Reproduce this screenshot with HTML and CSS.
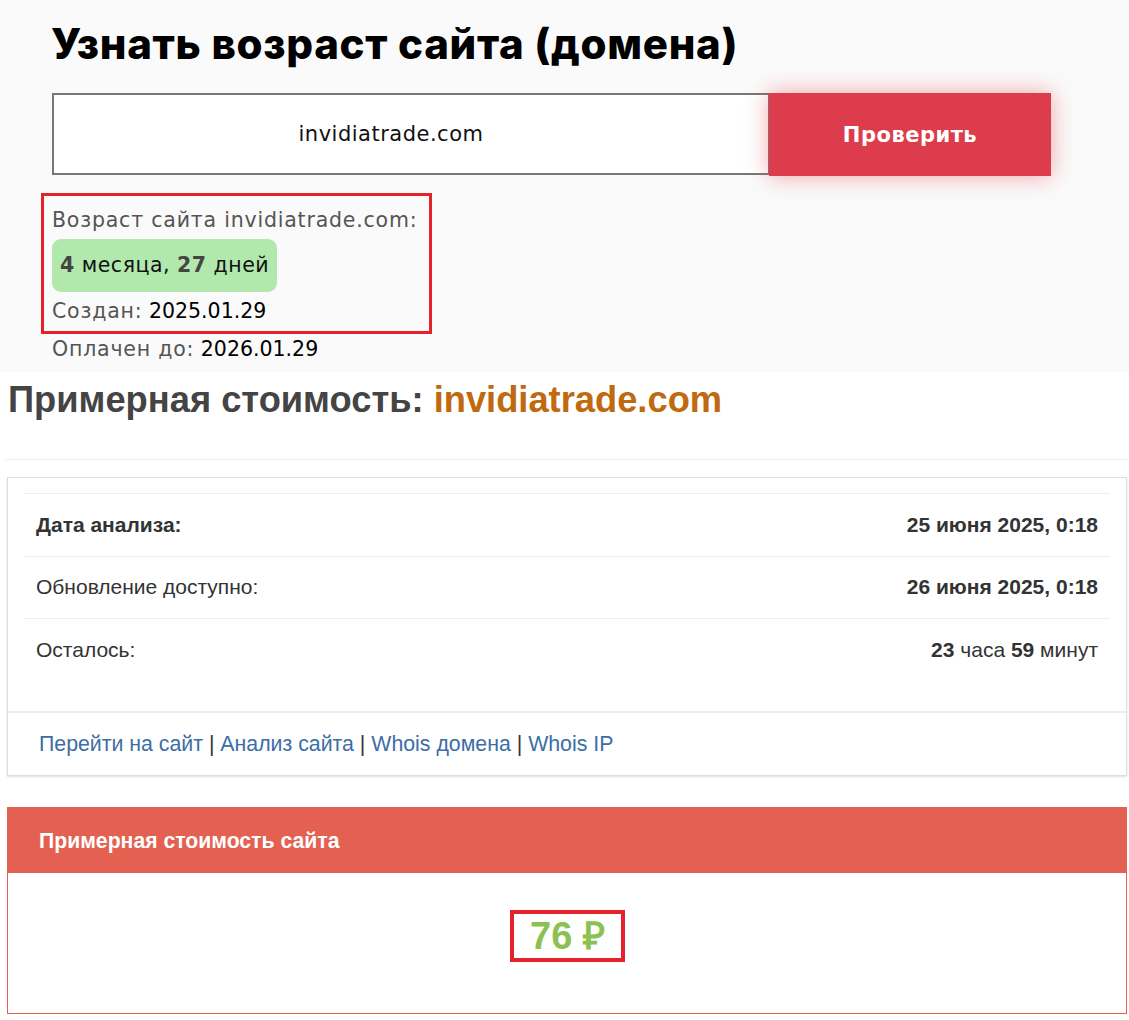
FILE: index.html
```html
<!DOCTYPE html>
<html lang="ru">
<head>
<meta charset="utf-8">
<title>Узнать возраст сайта</title>
<link rel="stylesheet" href="styles.css">
</head>
<body>
<section class="age">
  <h1 class="age-title">Узнать возраст сайта (домена)</h1>
  <form class="check">
    <div class="check-input">invidiatrade.com</div>
    <button class="check-btn" type="button">Проверить</button>
  </form>
  <div class="result">
    <div class="highlight">
      <p class="line muted">Возраст сайта invidiatrade.com:</p>
      <div class="pill"><b>4</b> месяца, <b>27</b> дней</div>
      <p class="line"><span class="muted">Создан:</span> 2025.01.29</p>
    </div>
    <p class="line paid"><span class="muted">Оплачен до:</span> 2026.01.29</p>
  </div>
</section>

<section class="cost">
  <h2 class="cost-title">Примерная стоимость: <span class="domain">invidiatrade.com</span></h2>
  <hr class="sep">
  <div class="card">
    <div class="card-body">
      <div class="row"><span class="label strong">Дата анализа:</span><span class="value strong">25 июня 2025, 0:18</span></div>
      <div class="row"><span class="label">Обновление доступно:</span><span class="value strong">26 июня 2025, 0:18</span></div>
      <div class="row"><span class="label">Осталось:</span><span class="value"><b>23</b> часа <b>59</b> минут</span></div>
    </div>
    <div class="card-footer">
      <a href="#">Перейти на сайт</a> | <a href="#">Анализ сайта</a> | <a href="#">Whois домена</a> | <a href="#">Whois IP</a>
    </div>
  </div>

  <div class="panel">
    <div class="panel-head">Примерная стоимость сайта</div>
    <div class="panel-body">
      <span class="price">76 ₽</span>
    </div>
  </div>
</section>
</body>
</html>
```

FILE: styles.css
```css
* { box-sizing: border-box; }
body {
  margin: 0;
  background: #ffffff;
  font-family: "DejaVu Sans", "Noto Sans", sans-serif;
}
.age {
  background: #fafafa;
  height: 372px;
  padding: 16px 0 0 0;
}
.age-title {
  margin: 0 0 0 51px;
  font-family: "Inter", "Noto Sans", sans-serif;
  font-size: 42px;
  font-weight: 800;
  line-height: 56px;
  color: #000;
  letter-spacing: 0.7px;
}
.check {
  display: flex;
  margin: 21px 0 0 52px;
  width: 999px;
}
.check-input {
  width: 718px;
  height: 82px;
  border: 2px solid #777;
  background: #fff;
  display: flex;
  align-items: center;
  justify-content: center;
  font-size: 21px;
  letter-spacing: 0.5px;
  color: #111;
  padding-right: 40px;
}
.check-btn {
  width: 282px;
  height: 83px;
  margin-left: -1px;
  border: none;
  background: #dc3c4b;
  color: #fff;
  font-family: inherit;
  font-size: 21px;
  letter-spacing: 0.5px;
  font-weight: 700;
  box-shadow: 0 0 22px rgba(230, 60, 75, 0.45);
}
.result {
  margin: 17px 0 0 41px;
}
.highlight {
  width: 391px;
  border: 3px solid #e4222b;
  padding: 6px 8px 1px 8px;
}
.line {
  margin: 0;
  font-size: 20.5px;
  line-height: 36px;
  color: #000;
  white-space: nowrap;
}
.muted { color: #555; letter-spacing: 0.8px; }
.pill {
  display: inline-block;
  margin-top: 1px;
  background: #b1e8ac;
  border-radius: 9px;
  padding: 0 8px;
  height: 53px;
  line-height: 53px;
  font-size: 20.5px;
  letter-spacing: 0.5px;
  color: #111;
}
.pill b { color: #444; font-weight: 700; }
.highlight .line:last-child { line-height: 38px; }
.paid { padding-left: 11px; line-height: 30px; }

.cost {
  font-family: "Liberation Sans", Arial, sans-serif;
  padding: 0 2px 0 7px;
}
.cost-title {
  margin: 0;
  padding: 8px 0 0 1px;
  font-size: 36.3px;
  line-height: 40px;
  color: #444;
  font-weight: 700;
}
.domain { color: #c0690f; }
.sep {
  margin: 39px 0 17px -2px;
  border: 0;
  border-top: 1px solid #eee;
}
.card {
  border: 1px solid #ddd;
  background: #fff;
  box-shadow: 0 1px 2px rgba(0,0,0,0.12);
}
.card-body {
  padding: 15px 16px 30px 17px;
}
.row {
  display: flex;
  justify-content: space-between;
  align-items: center;
  height: 62.5px;
  border-top: 1px solid #eee;
  padding: 0 12px 0 11px;
  font-size: 21px;
  color: #333;
}
.strong { font-weight: 700; }
.value b { font-weight: 700; }
.card-footer {
  border-top: 2px solid #eee;
  padding: 0 0 0 31px;
  height: 64px;
  line-height: 62px;
  font-size: 21.3px;
  color: #333;
}
.card-footer a {
  color: #3b6ea5;
  text-decoration: none;
}
.panel {
  margin-top: 31px;
  border: 1px solid #e46151;
}
.panel-head {
  background: #e46151;
  color: #fff;
  height: 65px;
  line-height: 65px;
  padding-left: 31px;
  font-size: 21.2px;
  font-weight: 700;
}
.panel-body {
  height: 140px;
  display: flex;
  align-items: center;
  justify-content: center;
  padding-bottom: 14px;
}
.price {
  display: inline-block;
  border: 4px solid #e4222b;
  padding: 0 16px;
  height: 52px;
  line-height: 44px;
  font-size: 38px;
  font-weight: 700;
  color: #8cc152;
  margin-left: 1px;
}
```
